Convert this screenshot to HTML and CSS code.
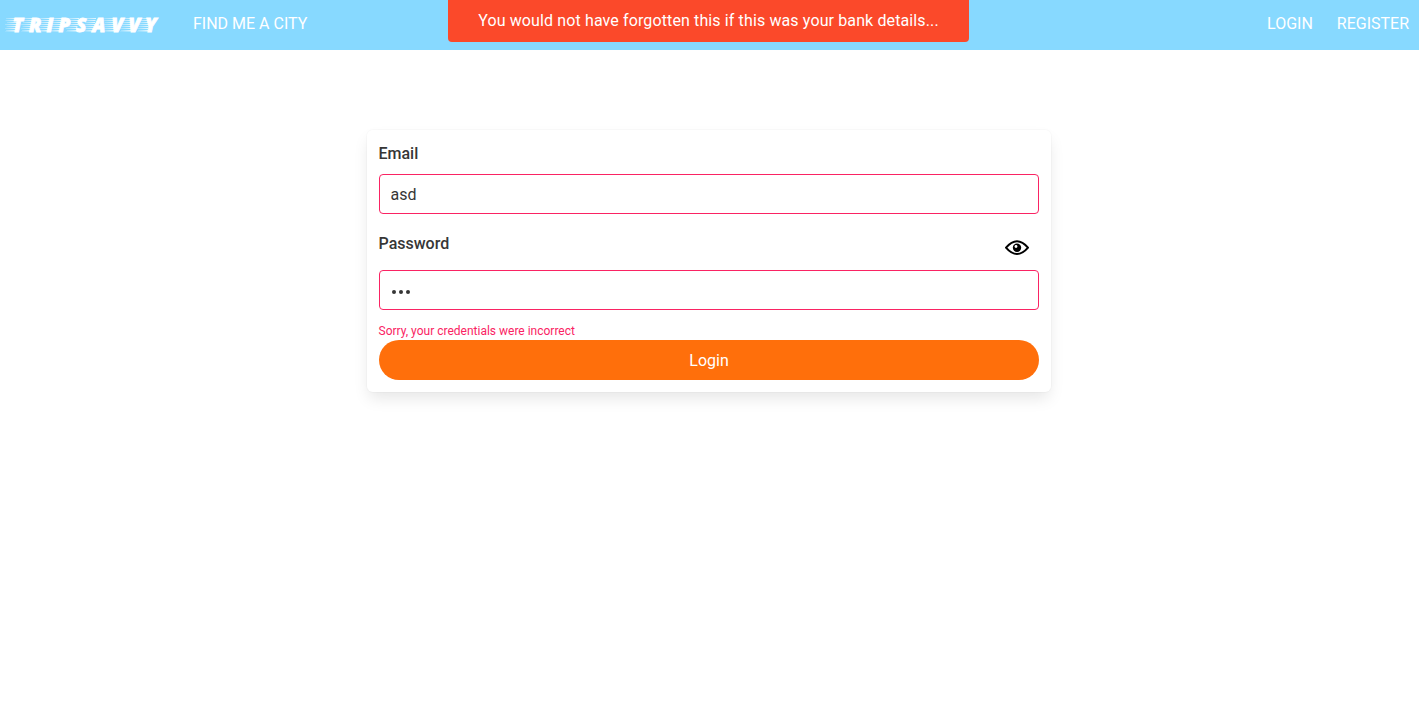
FILE: index.html
```html
<!DOCTYPE html>
<html lang="en">
<head>
<meta charset="utf-8">
<title>Tripsavvy</title>
<link rel="stylesheet" href="styles.css">
</head>
<body>
<nav class="navbar">
  <svg class="brand" width="170" height="50" viewBox="0 0 170 50" role="img" aria-label="Tripsavvy">
    <defs>
      <linearGradient id="fade" x1="0" x2="1" y1="0" y2="0">
        <stop offset="0" stop-color="#fff" stop-opacity="0.2"/>
        <stop offset="1" stop-color="#fff" stop-opacity="0.8"/>
      </linearGradient>
      <g id="speed" fill="url(#fade)">
        <rect x="1" y="18" width="12" height="1"/>
        <rect x="0.5" y="20" width="12" height="1"/>
        <rect x="2" y="22" width="10" height="1"/>
        <rect x="0" y="24" width="12" height="1"/>
        <rect x="1.5" y="26" width="10" height="1"/>
        <rect x="0" y="28" width="11" height="1"/>
        <rect x="1" y="30" width="10" height="1"/>
        <rect x="0" y="31.5" width="10.5" height="0.5"/>
      </g>
    </defs>
    <use href="#speed" x="5"/>
    <use href="#speed" x="21"/>
    <use href="#speed" x="37"/>
    <use href="#speed" x="49"/>
    <use href="#speed" x="66"/>
    <use href="#speed" x="83"/>
    <use href="#speed" x="103"/>
    <use href="#speed" x="120"/>
    <use href="#speed" x="137"/>
    <text class="brand-text" y="31.6" x="12.5 29 46.5 58.5 76 92.5 111.5 128.5 145">TRIPSAVVY</text>
  </svg>
  <a class="nav-link find">FIND ME A CITY</a>
  <div class="account">
    <a class="nav-link">LOGIN</a>
    <a class="nav-link">REGISTER</a>
  </div>
  <div class="toast">You would not have forgotten this if this was your bank details...</div>
</nav>
<main class="page">
  <form class="box">
    <label class="label" for="email">Email</label>
    <input class="input" id="email" type="text" value="asd">
    <div class="password-head">
      <label class="label">Password</label>
      <svg class="eye" width="24" height="16" viewBox="0 0 24 16">
        <path d="M1 7.7Q12-5 23 7.7Q12 20.5 1 7.7Z" fill="#fff" stroke="#000" stroke-width="2" stroke-linejoin="round"/>
        <circle cx="12" cy="7.7" r="4.2"/>
        <circle cx="11" cy="6.5" r="1.4" fill="#fff"/>
      </svg>
    </div>
    <div class="input dots"><i></i><i></i><i></i></div>
    <p class="help">Sorry, your credentials were incorrect</p>
    <button class="submit" type="button">Login</button>
  </form>
</main>
</body>
</html>
```
FILE: styles.css
```css
* { box-sizing: border-box; }
body {
  margin: 0;
  min-height: 100vh;
  background: #fff;
  color: #363636;
  font: 16px/24px Roboto, sans-serif;
}
.navbar {
  position: relative;
  display: flex;
  height: 50px;
  background: #87d9ff;
  color: #fff;
}
.brand { flex: none; }
.brand-text {
  fill: #fff;
  stroke: #fff;
  stroke-width: .8px;
  font: italic 900 19px "Open Sans", sans-serif;
}
.nav-link { padding-top: 12px; }
.find { margin-left: 23px; }
.account {
  display: flex;
  gap: 24px;
  margin-left: auto;
  padding-right: 10px;
}
.toast {
  position: absolute;
  top: 0;
  left: 448px;
  width: 521px;
  height: 42px;
  padding-top: 9px;
  border-radius: 0 0 4px 4px;
  background: #fb492a;
  text-align: center;
  letter-spacing: .12px;
}
.page {
  display: flex;
  justify-content: center;
  padding: 80px 1px 40px 0;
}
.box {
  width: 684px;
  height: 262px;
  padding: 12px;
  border-radius: 6px;
  box-shadow: 0 8px 16px -2px rgba(10, 10, 10, .1), 0 0 0 1px rgba(10, 10, 10, .02);
}
.label {
  display: block;
  height: 32px;
  margin-left: -.5px;
  font-weight: 500;
}
.input {
  display: block;
  width: 660px;
  height: 40px;
  padding: 0 10.5px;
  border: 1px solid #fa2363;
  border-radius: 4px;
  background: #fff;
  color: #363636;
  font: inherit;
  outline: 0;
}
.password-head {
  display: flex;
  justify-content: space-between;
  height: 56px;
  padding: 18px 10px 0 0;
}
.eye { margin-top: 8px; }
.dots {
  display: flex;
  align-items: center;
  gap: 3px;
  padding-left: 12px;
  padding-top: 3px;
}
.dots i {
  width: 4px;
  height: 4px;
  border-radius: 50%;
  background: #363636;
}
.help {
  height: 18px;
  margin: 12px 0 0 -.5px;
  color: #fa2363;
  font-size: 12px;
  line-height: 18px;
}
.submit {
  display: block;
  width: 660px;
  height: 40px;
  padding: 2px 0 0;
  border: 0;
  border-radius: 20px;
  background: #ff6f0b;
  color: #fff;
  font: inherit;
}
```
